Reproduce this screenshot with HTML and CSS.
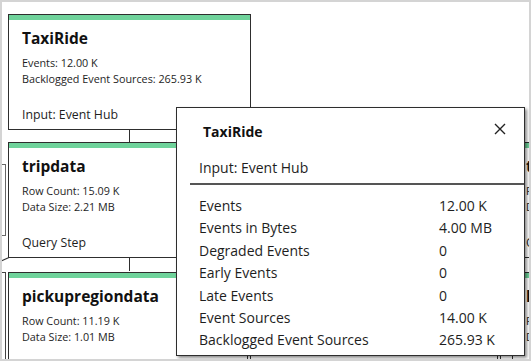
FILE: index.html
```html
<!DOCTYPE html>
<html>
<head lang="en">
    <meta charset="UTF-8">
    <title>Job diagram</title>
    <link rel="stylesheet" href="styles.css">
</head>
<body>
<div class="canvas">
    <!-- stubs of nodes scrolled off the left edge -->
    <div class="stub stub-top"></div>
    <div class="stub stub-bottom"></div>
    <div class="edge edge-diag"></div>

    <div class="node node-1">
        <div class="bar"></div>
        <div class="body">
            <div class="title">TaxiRide</div>
            <div class="stat">Events: 12.00 K</div>
            <div class="stat">Backlogged Event Sources: 265.93 K</div>
            <div class="kind">Input: Event Hub</div>
        </div>
    </div>
    <div class="link link-1"></div>

    <div class="node node-2">
        <div class="bar"></div>
        <div class="body">
            <div class="title">tripdata</div>
            <div class="stat">Row Count: 15.09 K</div>
            <div class="stat">Data Size: 2.21 MB</div>
            <div class="kind">Query Step</div>
        </div>
    </div>
    <div class="link link-2"></div>

    <div class="node node-3">
        <div class="bar"></div>
        <div class="body">
            <div class="title">pickupregiondata</div>
            <div class="stat">Row Count: 11.19 K</div>
            <div class="stat">Data Size: 1.01 MB</div>
            <div class="kind">Query Step</div>
        </div>
    </div>

    <div class="node node-r2">
        <div class="bar"></div>
        <div class="body">
            <div class="title">tlcdata</div>
            <div class="stat">Row Count: 14.00 K</div>
            <div class="stat">Data Size: 3.10 MB</div>
            <div class="kind">Query Step</div>
        </div>
    </div>
    <div class="node node-r3">
        <div class="bar"></div>
        <div class="body">
            <div class="title">lookup</div>
            <div class="stat">Row Count: 1.05 K</div>
            <div class="stat">Data Size: 0.22 MB</div>
            <div class="kind">Query Step</div>
        </div>
    </div>

    <div class="tick tick-1"></div>
    <div class="tick tick-2"></div>

    <div class="popup">
        <div class="popup-head">
            <span class="popup-title">TaxiRide</span>
            <svg class="close" width="12" height="12" viewBox="0 0 12 12">
                <path d="M1 1 L11 11 M11 1 L1 11" stroke="#222" stroke-width="1.4" fill="none"/>
            </svg>
        </div>
        <div class="popup-kind">Input: Event Hub</div>
        <div class="rows">
            <div class="row"><span>Events</span><span>12.00 K</span></div>
            <div class="row"><span>Events in Bytes</span><span>4.00 MB</span></div>
            <div class="row"><span>Degraded Events</span><span>0</span></div>
            <div class="row"><span>Early Events</span><span>0</span></div>
            <div class="row"><span>Late Events</span><span>0</span></div>
            <div class="row"><span>Event Sources</span><span>14.00 K</span></div>
            <div class="row"><span>Backlogged Event Sources</span><span>265.93 K</span></div>
        </div>
    </div>
</div>
</body>
</html>
```

FILE: styles.css
```css
* {
    padding: 0;
    margin: 0;
    box-sizing: border-box;
}

body {
    background: #fff;
    font-family: "Open Sans", "Noto Sans", sans-serif;
    color: #1e1e1e;
}

.canvas {
    position: relative;
    width: 531px;
    height: 361px;
    border: 2px solid #d4d4d4;
    overflow: hidden;
}

/* diagram nodes */
.node {
    position: absolute;
    width: 243px;
    height: 116px;
    background: #fff;
    border: 1px solid #2e2e2e;
}

.node .bar {
    height: 5px;
    background: #6fd39b;
}

.node .body {
    padding: 7px 0 0 13px;
    white-space: nowrap;
}

.node .title {
    font-size: 15.5px;
    font-weight: 700;
    line-height: 22px;
    margin-bottom: 6px;
    color: #111;
}

.node .stat {
    font-size: 10.8px;
    line-height: 16px;
}

.node .kind {
    font-size: 12.3px;
    line-height: 18px;
    margin-top: 19px;
}

.node-1 { left: 6px; top: 12px; }
.node-2 { left: 6px; top: 140px; }
.node-3 { left: 6px; top: 270px; }
.node-r2 { left: 510px; top: 140px; }
.node-r3 { left: 510px; top: 270px; }

.link {
    position: absolute;
    left: 127px;
    width: 1px;
    height: 14px;
    background: #2e2e2e;
}

.link-1 { top: 127px; }
.link-2 { top: 255px; }

.stub {
    position: absolute;
    left: -20px;
    width: 24px;
    border: 1px solid #666;
}

.stub-top { top: 162px; height: 72px; }
.stub-bottom { top: 270px; height: 100px; border-color: #444; }

.edge-diag {
    position: absolute;
    left: -2px;
    top: 259px;
    width: 22px;
    height: 1px;
    background: #333;
    transform: rotate(-24deg);
    transform-origin: left center;
}

.tick {
    position: absolute;
    top: 353px;
    width: 4px;
    height: 8px;
    border-left: 1px solid #333;
    border-right: 1px solid #333;
}

.tick-1 { left: 245px; }
.tick-2 { left: 495px; }

/* details popup */
.popup {
    position: absolute;
    left: 174px;
    top: 105px;
    width: 349px;
    height: 249px;
    background: #fff;
    border: 1px solid #2e2e2e;
    box-shadow: 2px 2px 3px rgba(0, 0, 0, 0.45);
}

.popup-head {
    display: flex;
    justify-content: space-between;
    align-items: center;
    padding: 4px 18px 0 26px;
    height: 42px;
}

.popup-title {
    font-size: 14px;
    font-weight: 700;
    color: #111;
}

.close {
    margin-top: -4px;
}

.popup-kind {
    font-size: 14px;
    line-height: 20px;
    padding: 8px 0 0 9px;
    height: 35px;
    border-bottom: 2px solid #555;
    margin-left: 13px;
}

.rows {
    padding: 10px 0 0 22px;
}

.row {
    display: grid;
    grid-template-columns: 240px 1fr;
    font-size: 14px;
    line-height: 22.4px;
}
```
